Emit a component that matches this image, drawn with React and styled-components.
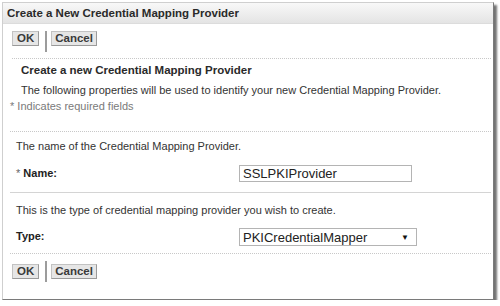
import styled, { createGlobalStyle } from 'styled-components';

const GlobalStyle = createGlobalStyle`
  body {
    margin: 0;
    background: #fff;
    font-family: 'Liberation Sans', Arial, sans-serif;
    color: #333;
  }
`;

const Frame = styled.div`
  box-sizing: border-box;
  margin: 2px 0 0 2px;
  width: 492px;
  height: 298px;
  border: 1px solid #cfcfcf;
  border-right-color: #7a7a7a;
  border-bottom-color: #7a7a7a;
  box-shadow: 3px 3px 2px rgba(0, 0, 0, 0.55);
  background: #fff;
  display: flex;
  flex-direction: column;
`;

const TitleBar = styled.div`
  height: 20px;
  display: flex;
  align-items: center;
  padding-left: 4px;
  background: linear-gradient(#f8f8f8, #e4e4e4);
  border-bottom: 1px solid #dcdcdc;
  font-size: 11.5px;
  font-weight: bold;
  color: #2a2a2a;
`;

const ButtonRow = styled.div`
  display: flex;
  align-items: ${(p) => p.$align};
  padding-left: 9px;
  margin-top: ${(p) => p.$top}px;
  height: 21px;
`;

const Button = styled.button`
  height: 15px;
  padding: 0 ${(p) => p.$pad}px;
  border: 1px solid #c2c2c2;
  border-right-color: #9a9a9a;
  border-bottom-color: #9a9a9a;
  background: #e6e6e6;
  font-family: 'Liberation Sans', Arial, sans-serif;
  font-size: 11.5px;
  font-weight: bold;
  color: #3a3a3a;
  line-height: 13px;
  cursor: pointer;
`;

const Separator = styled.div`
  width: 2px;
  height: 21px;
  background: #9c9c9c;
  margin: 0 4px 0 6px;
`;

const Divider = styled.div`
  margin: ${(p) => p.$top}px 2px 0 ${(p) => p.$left}px;
  border-top: 1px ${(p) => (p.$solid ? 'solid #d4d4d4' : 'dotted #c8c8c8')};
`;

const Heading = styled.div`
  margin: 5px 0 0 18px;
  font-size: 11.5px;
  font-weight: bold;
  color: #2a2a2a;
  line-height: 13px;
`;

const Text = styled.div`
  margin: ${(p) => p.$top}px 0 0 ${(p) => p.$left}px;
  font-size: 11px;
  color: ${(p) => (p.$muted ? '#7a7a7a' : '#333')};
  line-height: 13px;
`;

const FieldRow = styled.div`
  display: grid;
  grid-template-columns: 223px auto;
  align-items: center;
  margin: ${(p) => p.$top}px 0 0 13px;
`;

const Label = styled.label`
  font-size: 11px;
  font-weight: bold;
  color: #222;
  margin-top: -2px;
`;

const Star = styled.span`
  font-weight: normal;
  color: #666;
`;

const Input = styled.input`
  box-sizing: border-box;
  width: 173px;
  height: 17px;
  padding: 0 3px;
  border: 1px solid #b4b4b4;
  font-family: 'Liberation Sans', Arial, sans-serif;
  font-size: 13px;
  color: #222;
  outline: none;
`;

const Select = styled.div`
  box-sizing: border-box;
  width: 178px;
  height: 18px;
  padding: 0 7px 0 3px;
  border: 1px solid #b4b4b4;
  display: flex;
  align-items: center;
  justify-content: space-between;
  font-size: 13px;
  color: #222;
`;

const Arrow = styled.span`
  font-size: 8px;
  color: #111;
`;

function Buttons({ top, align }) {
  return (
    <ButtonRow $top={top} $align={align}>
      <Button $pad={4}>OK</Button>
      <Separator />
      <Button $pad={3}>Cancel</Button>
    </ButtonRow>
  );
}

export default function App() {
  return (
    <>
      <GlobalStyle />
      <Frame>
        <TitleBar>Create a New Credential Mapping Provider</TitleBar>
        <Buttons top={7} align="flex-start" />
        <Divider $top={6} $left={9} />
        <Heading>Create a new Credential Mapping Provider</Heading>
        <Text $top={7} $left={18}>
          The following properties will be used to identify your new Credential Mapping Provider.
        </Text>
        <Text $top={3} $left={7} $muted>* Indicates required fields</Text>
        <Divider $top={18} $left={7} />
        <Text $top={8} $left={13}>The name of the Credential Mapping Provider.</Text>
        <FieldRow $top={12}>
          <Label><Star>* </Star>Name:</Label>
          <Input defaultValue="SSLPKIProvider" />
        </FieldRow>
        <Divider $top={10} $left={7} $solid />
        <Text $top={11} $left={13}>This is the type of credential mapping provider you wish to create.</Text>
        <FieldRow $top={11}>
          <Label>Type:</Label>
          <Select>
            <span>PKICredentialMapper</span>
            <Arrow>▼</Arrow>
          </Select>
        </FieldRow>
        <Divider $top={7} $left={7} />
        <Buttons top={7} align="center" />
      </Frame>
    </>
  );
}
